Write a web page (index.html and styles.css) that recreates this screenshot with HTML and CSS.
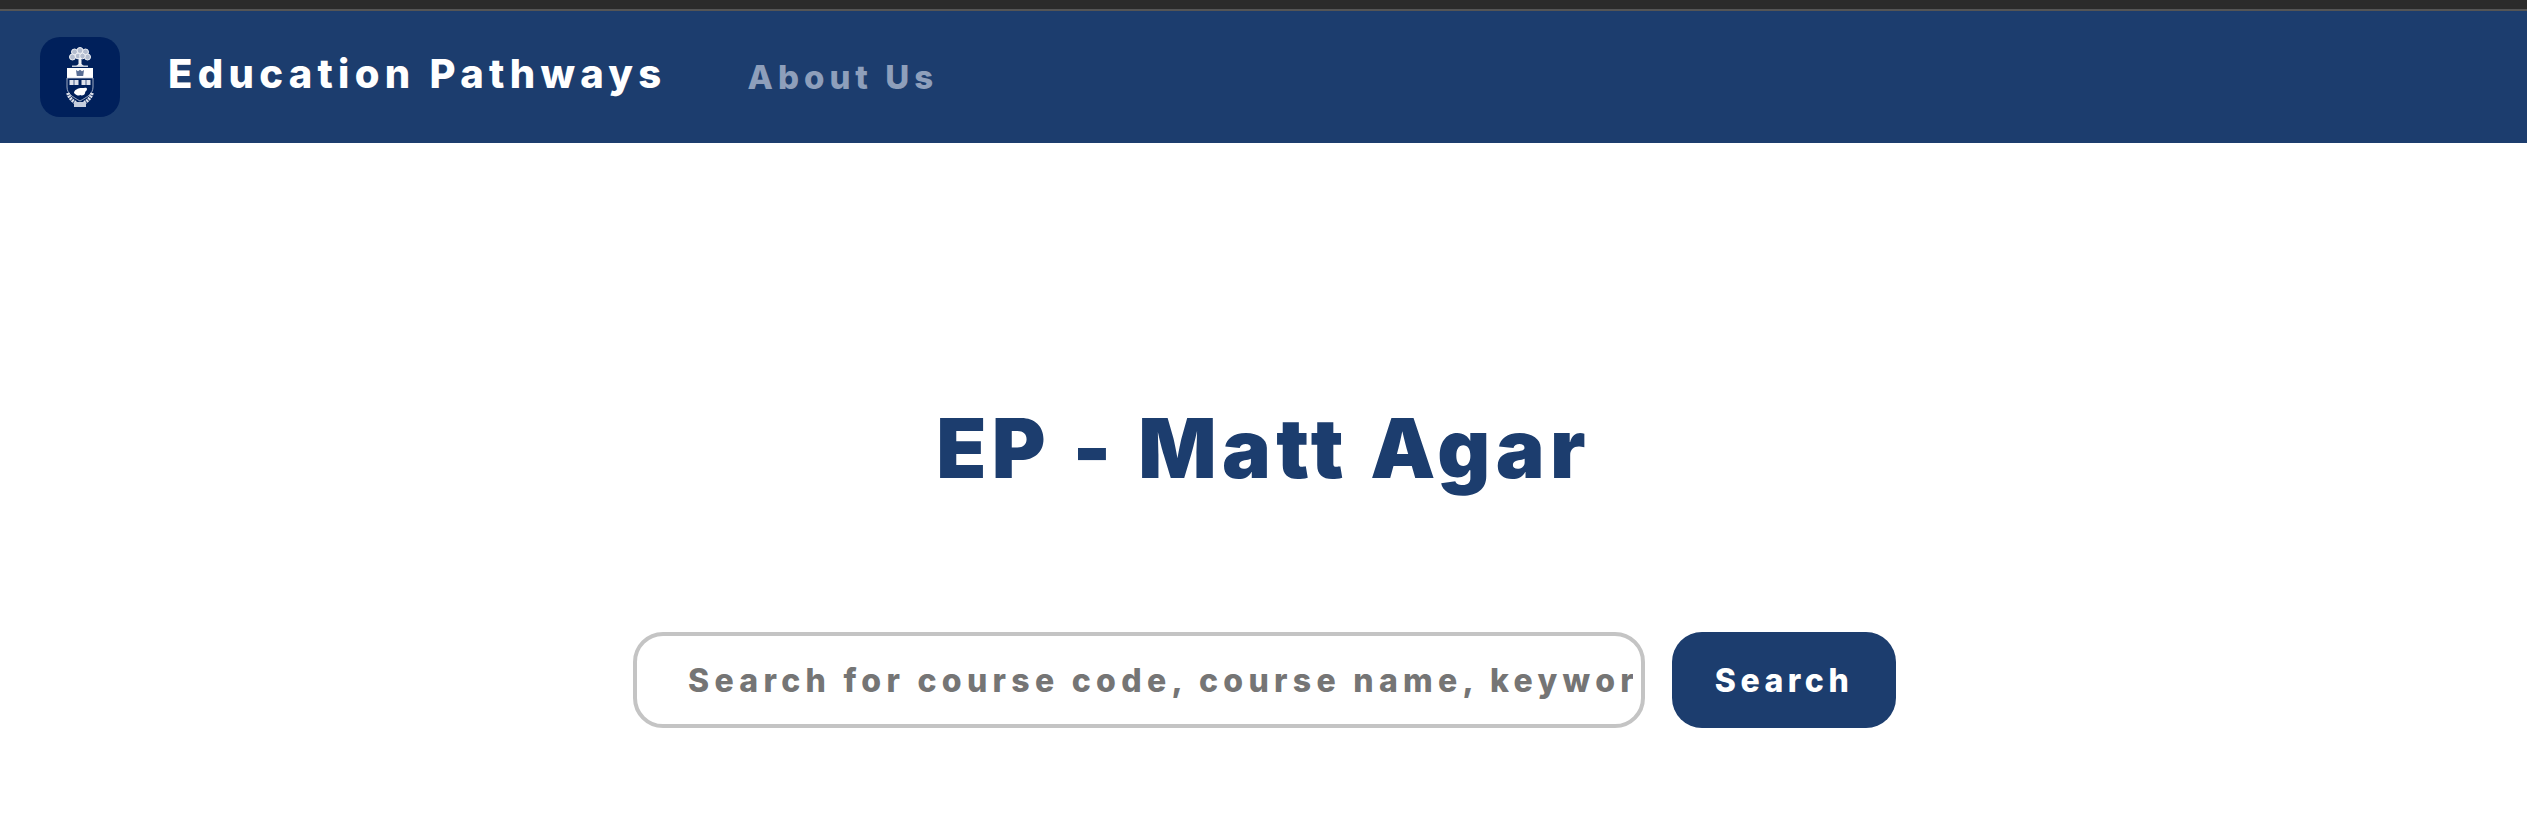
FILE: index.html
```html
<!DOCTYPE html>
<html lang="en">
<head>
    <meta charset="UTF-8">
    <meta name="viewport" content="width=device-width, initial-scale=1.0">
    <title>Education Pathways</title>
    <link rel="stylesheet" href="styles.css">
</head>
<body>
    <div class="window-edge"></div>
    <nav class="navbar">
        <div class="logo">
            <svg class="crest" viewBox="0 0 28 60" width="28" height="60">
                <!-- tree -->
                <g fill="#b4bdcf" stroke="#f0f2f6" stroke-width="1">
                    <circle cx="14" cy="3.500" r="3"/>
                    <circle cx="8.500" cy="5" r="3"/>
                    <circle cx="19.500" cy="5" r="3"/>
                    <circle cx="6.500" cy="10" r="3"/>
                    <circle cx="21.500" cy="10" r="3"/>
                    <circle cx="12" cy="9" r="2.800"/>
                    <circle cx="16.500" cy="9" r="2.800"/>
                </g>
                <path d="M12.500 11h3v6l3 2.500h-9l3-2.500z" fill="#f0f2f6"/>
                <rect x="6" y="18.500" width="16" height="1.500" fill="#c5cddc"/>
                <!-- shield -->
                <rect x="1" y="21" width="26" height="10" fill="#fff"/>
                <path d="M10 23l2 1.200 2-1.400 2 1.400 2-1.200-.8 6h-6.400z" fill="#00205b" opacity=".65"/>
                <path d="M1 31h26v9c0 7-6 10-13 14C7 50 1 47 1 40z" fill="#00205b" stroke="#c5cddc" stroke-width=".8"/>
                <rect x="3.500" y="33" width="9" height="5" fill="#dfe3ec"/>
                <rect x="15.500" y="33" width="9" height="5" fill="#dfe3ec"/>
                <path d="M8 33v5M20 33v5" stroke="#00205b" stroke-width=".7"/>
                <path d="M8 46c0-3 4-5 8-5 2 0 5-1 5 1 0 2-2 2-2 4 0 2-3 3-5 2-1 1-3 1-6-2z" fill="#fff"/>
                <!-- motto scroll -->
                <path d="M2 46c1 5 5 8 8 10M26 46c-1 5-5 8-8 10" fill="none" stroke="#dfe3ec" stroke-width="3.500" stroke-dasharray="2 .7"/>
                <rect x="8" y="55" width="12" height="5" fill="#c5cddc"/>
            </svg>
        </div>
        <span class="brand">Education Pathways</span>
        <a class="nav-link">About Us</a>
    </nav>
    <main class="content">
        <h1 class="title">EP - Matt Agar</h1>
        <form class="search">
            <input class="search-input" type="text" placeholder="Search for course code, course name, keyword ...">
            <button class="search-button" type="button">Search</button>
        </form>
    </main>
</body>
</html>
```

FILE: styles.css
```css
body {
    margin: 0;
    background-color: #fff;
    font-family: "Inter", "Open Sans", sans-serif;
    font-weight: 800;
}
.window-edge {
    height: 9px;
    background-color: #2b2b2b;
    border-bottom: 2px solid #555;
}
.navbar {
    display: flex;
    align-items: center;
    height: 132px;
    padding-left: 40px;
    background-color: #1c3d6e;
}
.logo {
    display: flex;
    align-items: center;
    justify-content: center;
    width: 80px;
    height: 80px;
    border-radius: 20px;
    background-color: #00205b;
}
.brand {
    margin-left: 48px;
    padding-bottom: 7px;
    color: #fff;
    font-size: 40px;
    letter-spacing: 5.300px;
}
.nav-link {
    margin-left: 81px;
    color: #8e9fbb;
    font-size: 33px;
    letter-spacing: 5px;
}
.content {
    display: flex;
    flex-direction: column;
    align-items: center;
}
.title {
    margin: 256px 0 0;
    color: #1c3d6e;
    font-size: 82px;
    font-weight: 900;
    line-height: 100px;
    letter-spacing: 5.300px;
}
.search {
    display: flex;
    gap: 27px;
    margin-top: 133px;
    padding-left: 2px;
}
.search-input {
    box-sizing: border-box;
    width: 1012px;
    height: 96px;
    padding: 0 8px 0 51px;
    border: 4px solid #c4c4c4;
    border-radius: 30px;
    outline: none;
    font-family: inherit;
    font-size: 32px;
    font-weight: 800;
    letter-spacing: 5.300px;
}
.search-input::placeholder {
    color: #757575;
    opacity: 1;
}
.search-button {
    width: 224px;
    height: 96px;
    border: none;
    border-radius: 30px;
    background-color: #1c3d6e;
    color: #fff;
    font-family: inherit;
    font-size: 32px;
    font-weight: 800;
    letter-spacing: 4.500px;
}
```
